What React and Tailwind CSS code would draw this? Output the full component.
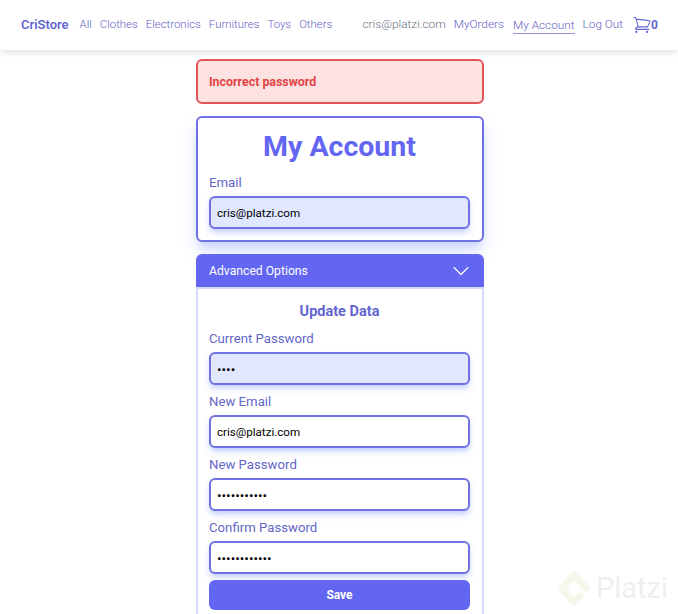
import React from 'react';
import { ChevronDown } from 'lucide-react';

const fontStack = { fontFamily: 'Roboto, "Noto Sans", sans-serif' };

const leftLinks = ['All', 'Clothes', 'Electronics', 'Furnitures', 'Toys', 'Others'];

const Field = ({ label, type = 'text', value, filled }) => (
  <div className="flex flex-col">
    <label className="mb-[5px] h-[18px] text-[13.2px] leading-[20px] text-[#6366c9]">{label}</label>
    <input
      readOnly
      type={type}
      value={value}
      className={`h-[33px] w-full rounded-md border-2 border-[#6f72e0] px-[6px] text-black shadow-md shadow-indigo-200 outline-none ${
        type === 'password' ? 'text-[13.5px]' : 'text-[11.6px]'
      } ${filled ? 'bg-[#e0e7ff]' : 'bg-white'}`}
    />
  </div>
);

const App = () => {
  return (
    <div className="relative h-[614px] overflow-hidden bg-white" style={fontStack}>
      <nav className="flex h-[50px] items-center justify-between whitespace-nowrap bg-white pl-[21px] pr-[20px] font-light text-[#5f62c4] shadow-md shadow-gray-200">
        <ul className="flex items-center gap-[8px] text-[11.4px]">
          <li className="mr-[3px] text-[13px] font-semibold text-[#6366d1]">CriStore</li>
          {leftLinks.map((link) => (
            <li key={link}>{link}</li>
          ))}
        </ul>
        <ul className="flex items-center gap-[9px] text-[11.8px]">
          <li className="mr-[-1px] text-gray-500">cris@platzi.com</li>
          <li>MyOrders</li>
          <li className="mr-[-1px] border-b border-[#8f91dc] leading-[16px]">My Account</li>
          <li>Log Out</li>
          <li className="flex items-center text-[12px] font-bold text-[#6366d1]">
            <svg width="20" height="20" viewBox="0 0 24 24" fill="none" stroke="currentColor" strokeWidth="1.25" strokeLinecap="round" strokeLinejoin="round">
              <path d="M2.25 3h1.386c.51 0 .955.343 1.087.835l.383 1.437M7.5 14.25a3 3 0 00-3 3h15.75m-12.75-3h11.218c1.121-2.3 2.1-4.684 2.924-7.138a60.114 60.114 0 00-16.536-1.84M7.5 14.25L5.106 5.272M6 20.25a.75.75 0 11-1.5 0 .75.75 0 011.5 0zm12.75 0a.75.75 0 11-1.5 0 .75.75 0 011.5 0z" />
            </svg>
            <span className="-ml-px">0</span>
          </li>
        </ul>
      </nav>

      <main className="ml-[196px] flex w-[288px] flex-col pt-[9px]">
        <div className="flex h-[45px] items-center rounded-md border-2 border-[#e25555] bg-[#fee2e2] pl-[11px] pt-[1px] text-[12.4px] font-bold text-[#e04444]">
          Incorrect password
        </div>

        <section className="mt-[12px] h-[126px] rounded-md border-2 border-[#6f72e0] bg-white pl-[11px] pr-[12px] pt-[10px] shadow-lg shadow-indigo-200">
          <h1 className="mb-[7px] text-center text-[28.5px] font-bold leading-[38px] text-[#6366f1]">My Account</h1>
          <Field label="Email" value="cris@platzi.com" filled />
        </section>

        <section className="mt-[12px]">
          <div className="flex h-[33px] items-center justify-between rounded-t-md bg-[#6366f1] pl-[13px] pr-[9px] text-[12.2px] text-white">
            <span className="pt-[1px]">Advanced Options</span>
            <ChevronDown size={28} strokeWidth={1} />
          </div>
          <div className="flex flex-col border-x-2 border-t-2 border-[#d4dcfc] bg-white pb-4 pl-[11px] pr-[12px] pt-[13px]">
            <h2 className="mb-[7px] text-center text-[14.5px] font-bold leading-[20px] text-[#6366d1]">Update Data</h2>
            <div className="flex flex-col gap-[7px]">
              <Field label="Current Password" type="password" value="1234" filled />
              <Field label="New Email" value="cris@platzi.com" />
              <Field label="New Password" type="password" value="12345678901" />
              <Field label="Confirm Password" type="password" value="123456789012" />
            </div>
            <button className="mt-[6px] h-[30px] rounded-md bg-[#6366f1] text-[12px] font-bold text-white">Save</button>
          </div>
        </section>
      </main>

      {/* watermark */}
      <div className="absolute bottom-[7px] right-[10px] flex items-center gap-[5px]">
        <svg width="34" height="37" viewBox="0 0 34 37" fill="none" stroke="#f3f8ea" strokeWidth="7" strokeLinecap="round" strokeLinejoin="round">
          <path d="M29 18 L17 5 L5 19 L17 32 L23 26" />
        </svg>
        <span className="text-[29px] leading-none text-[#efefef]">Platzi</span>
      </div>
    </div>
  );
};

export default App;
